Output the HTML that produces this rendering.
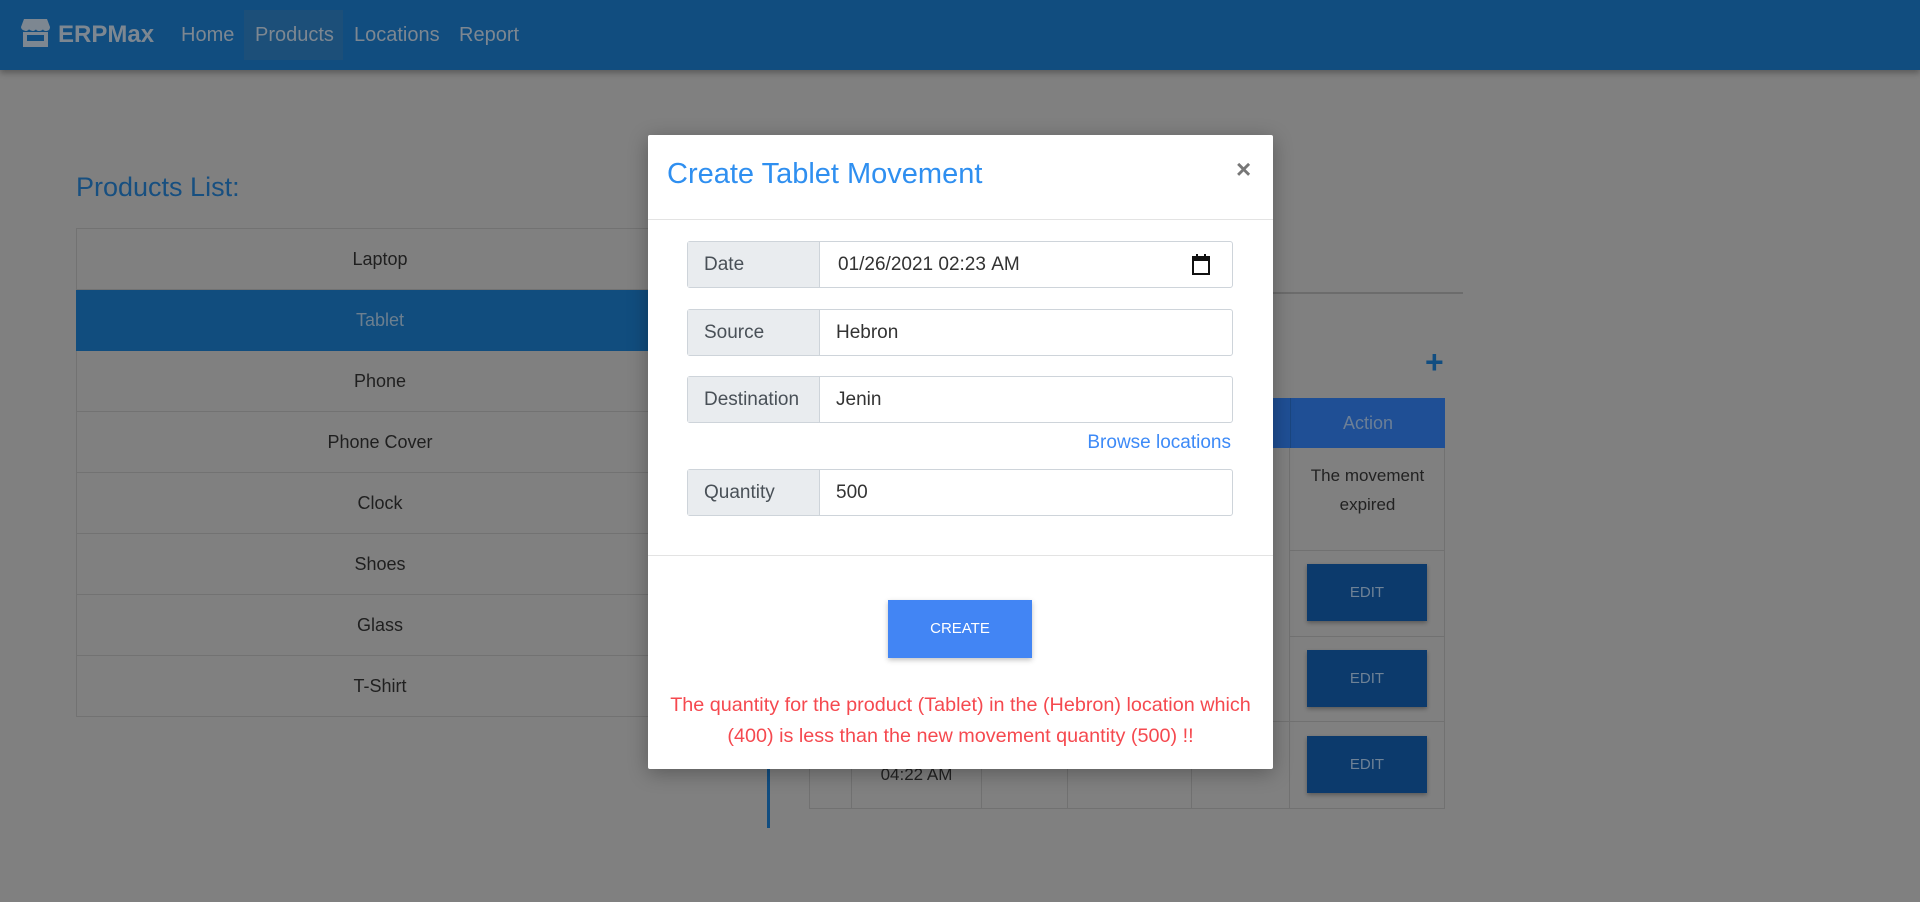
<!DOCTYPE html>
<html><head><meta charset="utf-8"><style>
*{box-sizing:border-box;margin:0;padding:0}
body{width:1920px;height:902px;overflow:hidden;background:#808080;font-family:"Liberation Sans",sans-serif;position:relative}
.a{position:absolute}
.nav{left:0;top:0;width:1920px;height:70px;background:#114d7f;box-shadow:0 3px 6px rgba(0,0,0,.3)}
.nav span{position:absolute;top:24px;font-size:20px;color:#7d8791}
.li{position:absolute;left:76px;width:608px;height:61px;border:1px solid #727272;border-top:none;text-align:center;line-height:60px;font-size:18px;color:#1f1f1f}
.edit{position:absolute;left:1307px;width:120px;height:57px;background:#0c3a6c;color:#6f8296;font-size:15px;text-align:center;line-height:57px;box-shadow:0 2px 4px rgba(0,0,0,.3)}
.modal{left:648px;top:135px;width:625px;height:634px;background:#fff;box-shadow:0 4px 20px rgba(0,0,0,.3);border-radius:2px}
.ig{position:absolute;left:39px;width:546px;height:47px;border:1px solid #ced4da;border-radius:3px;background:#fff}
.ig .l{position:absolute;left:0;top:0;width:132px;height:45px;background:#e9ecef;border-right:1px solid #ced4da;font-size:19px;color:#495057;line-height:45px;padding-left:16px}
.ig .v{position:absolute;left:148px;top:0;line-height:45px;font-size:19px;color:#333}
</style></head><body>
<div class="a nav">
 <svg class="a" style="left:21px;top:19px" width="29" height="28" viewBox="0 0 29 28"><path d="M3 0h23l3 8c0 3-2 4-4 4s-3-1-3-2c0 1-2 2-4 2s-3-1-3-2c0 1-2 2-3 2s-4-1-4-2c0 1-2 2-3 2S0 11 0 8z" fill="#7d8791"/><path d="M2 13h25v15H2z M6 16v6h17v-6z" fill="#7d8791" fill-rule="evenodd"/></svg>
 <span style="left:58px;top:21px;font-size:24px;font-weight:bold">ERPMax</span>
 <div class="a" style="left:244px;top:10px;width:99px;height:50px;background:#1c4f79"></div>
 <span style="left:181px">Home</span><span style="left:255px">Products</span><span style="left:354px">Locations</span><span style="left:459px">Report</span>
</div>
<div class="a" style="left:76px;top:172px;font-size:27px;color:#174f80">Products List:</div>
<div class="li" style="top:228px;border-top:1px solid #727272;height:62px">Laptop</div>
<div class="li" style="top:290px;background:#114d7e;color:#6c7f8f;border-color:#114d7e">Tablet</div>
<div class="li" style="top:351px">Phone</div>
<div class="li" style="top:412px">Phone Cover</div>
<div class="li" style="top:473px">Clock</div>
<div class="li" style="top:534px">Shoes</div>
<div class="li" style="top:595px">Glass</div>
<div class="li" style="top:656px">T-Shirt</div>
<div class="a" style="left:1273px;top:292px;width:190px;height:2px;background:#6c6c6c"></div>
<div class="a" style="left:1425px;top:344px;font-size:32px;font-weight:bold;color:#114d80">+</div>
<div class="a" style="left:767px;top:760px;width:3px;height:68px;background:#114d80"></div>
<div class="a" style="left:809px;top:398px;width:636px;height:50px;background:#1f4f95"></div>
<div class="a" style="left:1290px;top:398px;width:155px;height:50px;text-align:center;line-height:50px;font-size:18px;color:#6c7f96;border-left:1px solid #1b467f">Action</div>
<div class="a" style="left:809px;top:448px;width:636px;height:361px;border:1px solid #717171;border-top:none"></div>
<div class="a" style="left:1289px;top:448px;width:1px;height:361px;background:#717171"></div>
<div class="a" style="left:1290px;top:550px;width:155px;height:1px;background:#717171"></div>
<div class="a" style="left:1290px;top:636px;width:155px;height:1px;background:#717171"></div>
<div class="a" style="left:809px;top:721px;width:636px;height:1px;background:#717171"></div>
<div class="a" style="left:851px;top:721px;width:1px;height:88px;background:#717171"></div>
<div class="a" style="left:981px;top:721px;width:1px;height:88px;background:#717171"></div>
<div class="a" style="left:1067px;top:721px;width:1px;height:88px;background:#717171"></div>
<div class="a" style="left:1191px;top:721px;width:1px;height:88px;background:#717171"></div>
<div class="a" style="left:852px;top:765px;width:129px;text-align:center;font-size:17px;color:#222">04:22 AM</div>
<div class="a" style="left:1290px;top:461px;width:155px;text-align:center;font-size:17px;line-height:29px;color:#222">The movement<br>expired</div>
<div class="edit" style="top:564px">EDIT</div>
<div class="edit" style="top:650px">EDIT</div>
<div class="edit" style="top:736px">EDIT</div>

<div class="a modal">
 <div class="a" style="left:19px;top:23px;font-size:29px;color:#2f8ff0">Create Tablet Movement</div>
 <div class="a" style="left:588px;top:19px;font-size:26px;font-weight:bold;color:#777">×</div>
 <div class="a" style="left:0;top:84px;width:625px;height:1px;background:#e3e3e3"></div>
 <div class="ig" style="top:106px"><div class="l">Date</div><div class="v" style="left:150px">01/26/2021&nbsp;02:23&nbsp;AM</div>
  <svg class="a" style="left:503px;top:12px" width="20" height="22" viewBox="0 0 20 22"><rect x="2" y="3" width="16" height="17" fill="none" stroke="#111" stroke-width="2"/><rect x="2" y="3" width="16" height="4" fill="#111"/><rect x="5" y="0" width="2" height="4" fill="#111"/><rect x="13" y="0" width="2" height="4" fill="#111"/></svg></div>
 <div class="ig" style="top:174px"><div class="l">Source</div><div class="v">Hebron</div></div>
 <div class="ig" style="top:241px"><div class="l">Destination</div><div class="v">Jenin</div></div>
 <div class="a" style="right:42px;top:297px;font-size:19px;color:#3d8af7">Browse locations</div>
 <div class="ig" style="top:334px"><div class="l">Quantity</div><div class="v">500</div></div>
 <div class="a" style="left:0;top:420px;width:625px;height:1px;background:#e3e3e3"></div>
 <div class="a" style="left:240px;top:465px;width:144px;height:58px;background:#4285f4;color:#fff;font-size:15px;text-align:center;line-height:58px;box-shadow:0 2px 5px rgba(0,0,0,.25)">CREATE</div>
 <div class="a" style="left:0;top:555px;width:625px;text-align:center;font-size:19.8px;line-height:31px;color:#f5494f">The quantity for the product (Tablet) in the (Hebron) location which<br>(400) is less than the new movement quantity (500) !!</div>
</div>
</body></html>
